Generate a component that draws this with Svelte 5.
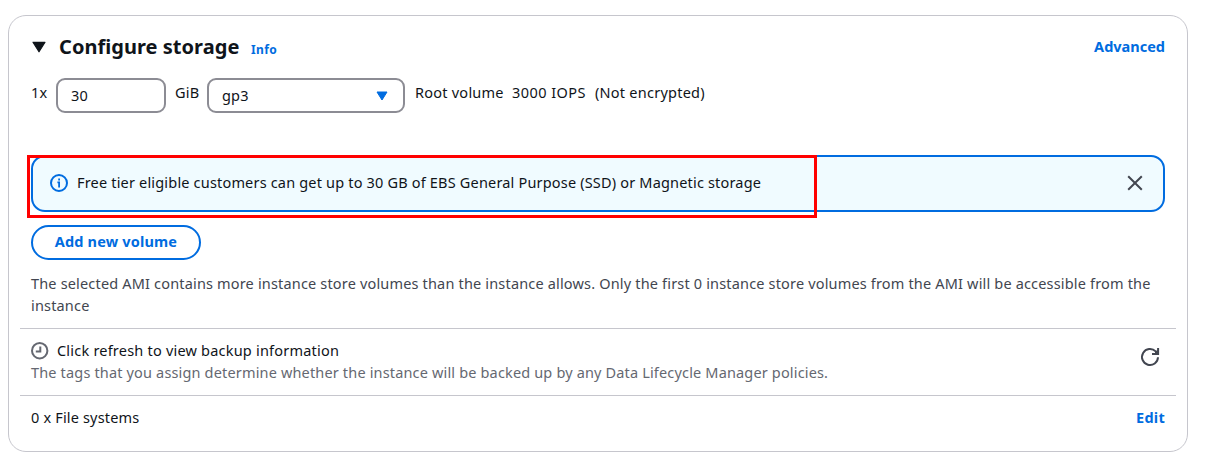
<script>
  let size = $state('30');
  const volumeType = 'gp3';
</script>

<section class="card">
  <header class="header">
    <svg class="caret" width="14" height="12" viewBox="0 0 14 12"><path d="M1 1.3h12L7 10.8z" fill="#0f141a" stroke="#0f141a" stroke-width="1.2" stroke-linejoin="round" /></svg>
    <h2>Configure storage</h2>
    <a class="info">Info</a>
    <a class="link advanced">Advanced</a>
  </header>

  <div class="fields">
    <span class="count">1x</span>
    <input class="field size" bind:value={size} />
    <span class="unit">GiB</span>
    <div class="field select">
      <span>{volumeType}</span>
      <svg width="12" height="10" viewBox="0 0 12 10"><path d="M1 1h10L6 9z" fill="#006ce0" stroke="#006ce0" stroke-linejoin="round" /></svg>
    </div>
    <span class="root">Root volume</span>
    <span class="iops">3000 IOPS</span>
    <span class="enc">(Not encrypted)</span>
  </div>

  <div class="alert">
    <svg width="18" height="18" viewBox="0 0 18 18" fill="none" stroke="#006ce0" stroke-width="2"><circle cx="9" cy="9" r="8" /><path d="M9.1 4.4v2M7.4 8.3h1.7v5.1" stroke-width="1.8" /></svg>
    <span class="alert-text">Free tier eligible customers can get up to 30 GB of EBS General Purpose (SSD) or Magnetic storage</span>
    <svg class="close" width="16" height="16" viewBox="0 0 16 16"><path d="M1.2 1.2l13.6 13.6M14.8 1.2L1.2 14.8" stroke="#424650" stroke-width="2" /></svg>
    <div class="highlight"></div>
  </div>

  <button class="add">Add new volume</button>

  <p class="note">The selected AMI contains more instance store volumes than the instance allows. Only the first 0 instance store volumes from the AMI will be accessible from the<br />instance</p>

  <div class="row backup">
    <div class="backup-body">
      <div class="backup-title">
        <svg width="18" height="18" viewBox="0 0 18 18" fill="none" stroke="#656871" stroke-width="2"><circle cx="8.7" cy="8.7" r="7.7" /><path d="M9.3 4.6v5H4.8" /></svg>
        <span class="refresh-text">Click refresh to view backup information</span>
      </div>
      <div class="tags">The tags that you assign determine whether the instance will be backed up by any Data Lifecycle Manager policies.</div>
    </div>
    <svg class="refresh" width="20" height="20" viewBox="0 0 20 20" fill="none" stroke="#424650" stroke-width="2"><path d="M18 10.2a8 8 0 1 1-2.3-5.8l2.2 2" /><path d="M18.1 1v6H12" /><path d="M15 4.2l3 -1.2v4h-3z" fill="#424650" stroke="none" /></svg>
  </div>

  <div class="row files">
    <span class="fs">0 x File systems</span>
    <a class="link edit">Edit</a>
  </div>
</section>

<style>
  :global(body) { background: #fff; }
  * { box-sizing: border-box; }
  .card {
    width: 1180px;
    height: 437px;
    margin: 15px 0 0 8px;
    padding: 0 11px;
    border: 1px solid #c6c6cd;
    border-radius: 18px;
    background: #fff;
    color: #0f141a;
    font: 14.5px/20px "Noto Sans", "Open Sans", sans-serif;
    letter-spacing: 0.17px;
    white-space: nowrap;
    display: flex;
    flex-direction: column;
  }
  .header, .fields, .alert, .add, .note { margin-left: 11px; margin-right: 11px; flex: none; }
  .header { height: 62px; display: flex; align-items: center; }
  .caret { margin-left: 1px; }
  h2 { margin: 0 0 0 13px; width: 192px; font-size: 20px; line-height: 24px; font-weight: 700; letter-spacing: 0.04px; padding-bottom: 1px; }
  .info { color: #006ce0; font-size: 12px; font-weight: 700; letter-spacing: 0.35px; padding-top: 5px; }
  .link { margin-left: auto; color: #006ce0; font-weight: 700; padding-bottom: 2px; letter-spacing: 0; }
  .edit { letter-spacing: 0.25px; }
  .fields { height: 35px; display: flex; }
  .fields > span { line-height: 20px; margin-top: 4px; letter-spacing: 0.24px; }
  .count { width: 25px; }
  .field { height: 35px; border: 2px solid #8c8c94; border-radius: 9px; background: #fff; padding: 0 13px 2px; font: inherit; letter-spacing: inherit; color: inherit; outline: none; }
  .size { width: 110px; margin-right: 9px; }
  .unit { width: 32px; }
  .select { width: 198px; margin-right: 10px; padding-right: 15px; display: flex; align-items: center; justify-content: space-between; }
  .select svg { margin-top: 2px; }
  .root { width: 97px; }
  .iops { width: 83px; }
  .fields > .iops { letter-spacing: 0.45px; }
  .alert {
    position: relative;
    height: 57px;
    margin-top: 42px;
    padding: 0 20px 2px 17px;
    display: flex;
    align-items: center;
    border: 2px solid #006ce0;
    border-radius: 14px;
    background: #f0fbff;
  }
  .alert-text { margin-left: 9px; padding-bottom: 1px; letter-spacing: 0.18px; }
  .close { margin-left: auto; }
  .highlight { position: absolute; left: -6px; top: -2px; width: 790px; height: 63px; border: 3px solid #f00; }
  .add { align-self: flex-start; width: 170px; height: 35px; margin-top: 13px; padding: 0 0 3px; border: 2px solid #006ce0; border-radius: 18px; background: #fff; color: #006ce0; font: 700 14.5px/20px "Noto Sans", "Open Sans", sans-serif; letter-spacing: 0.17px; }
  .note { margin-top: 12px; margin-bottom: 12px; line-height: 22px; color: #424650; }
  .row { border-top: 1px solid #c6c6cd; padding: 11px 11px 0; display: flex; flex: none; }
  .backup { height: 67px; }
  .backup-title { display: flex; align-items: center; height: 22px; }
  .backup-title svg { margin-right: 8px; }
  .refresh-text { padding-bottom: 2px; letter-spacing: 0.21px; }
  .tags { color: #656871; letter-spacing: 0.16px; }
  .refresh { margin: 7px 5px 0 auto; }
</style>
